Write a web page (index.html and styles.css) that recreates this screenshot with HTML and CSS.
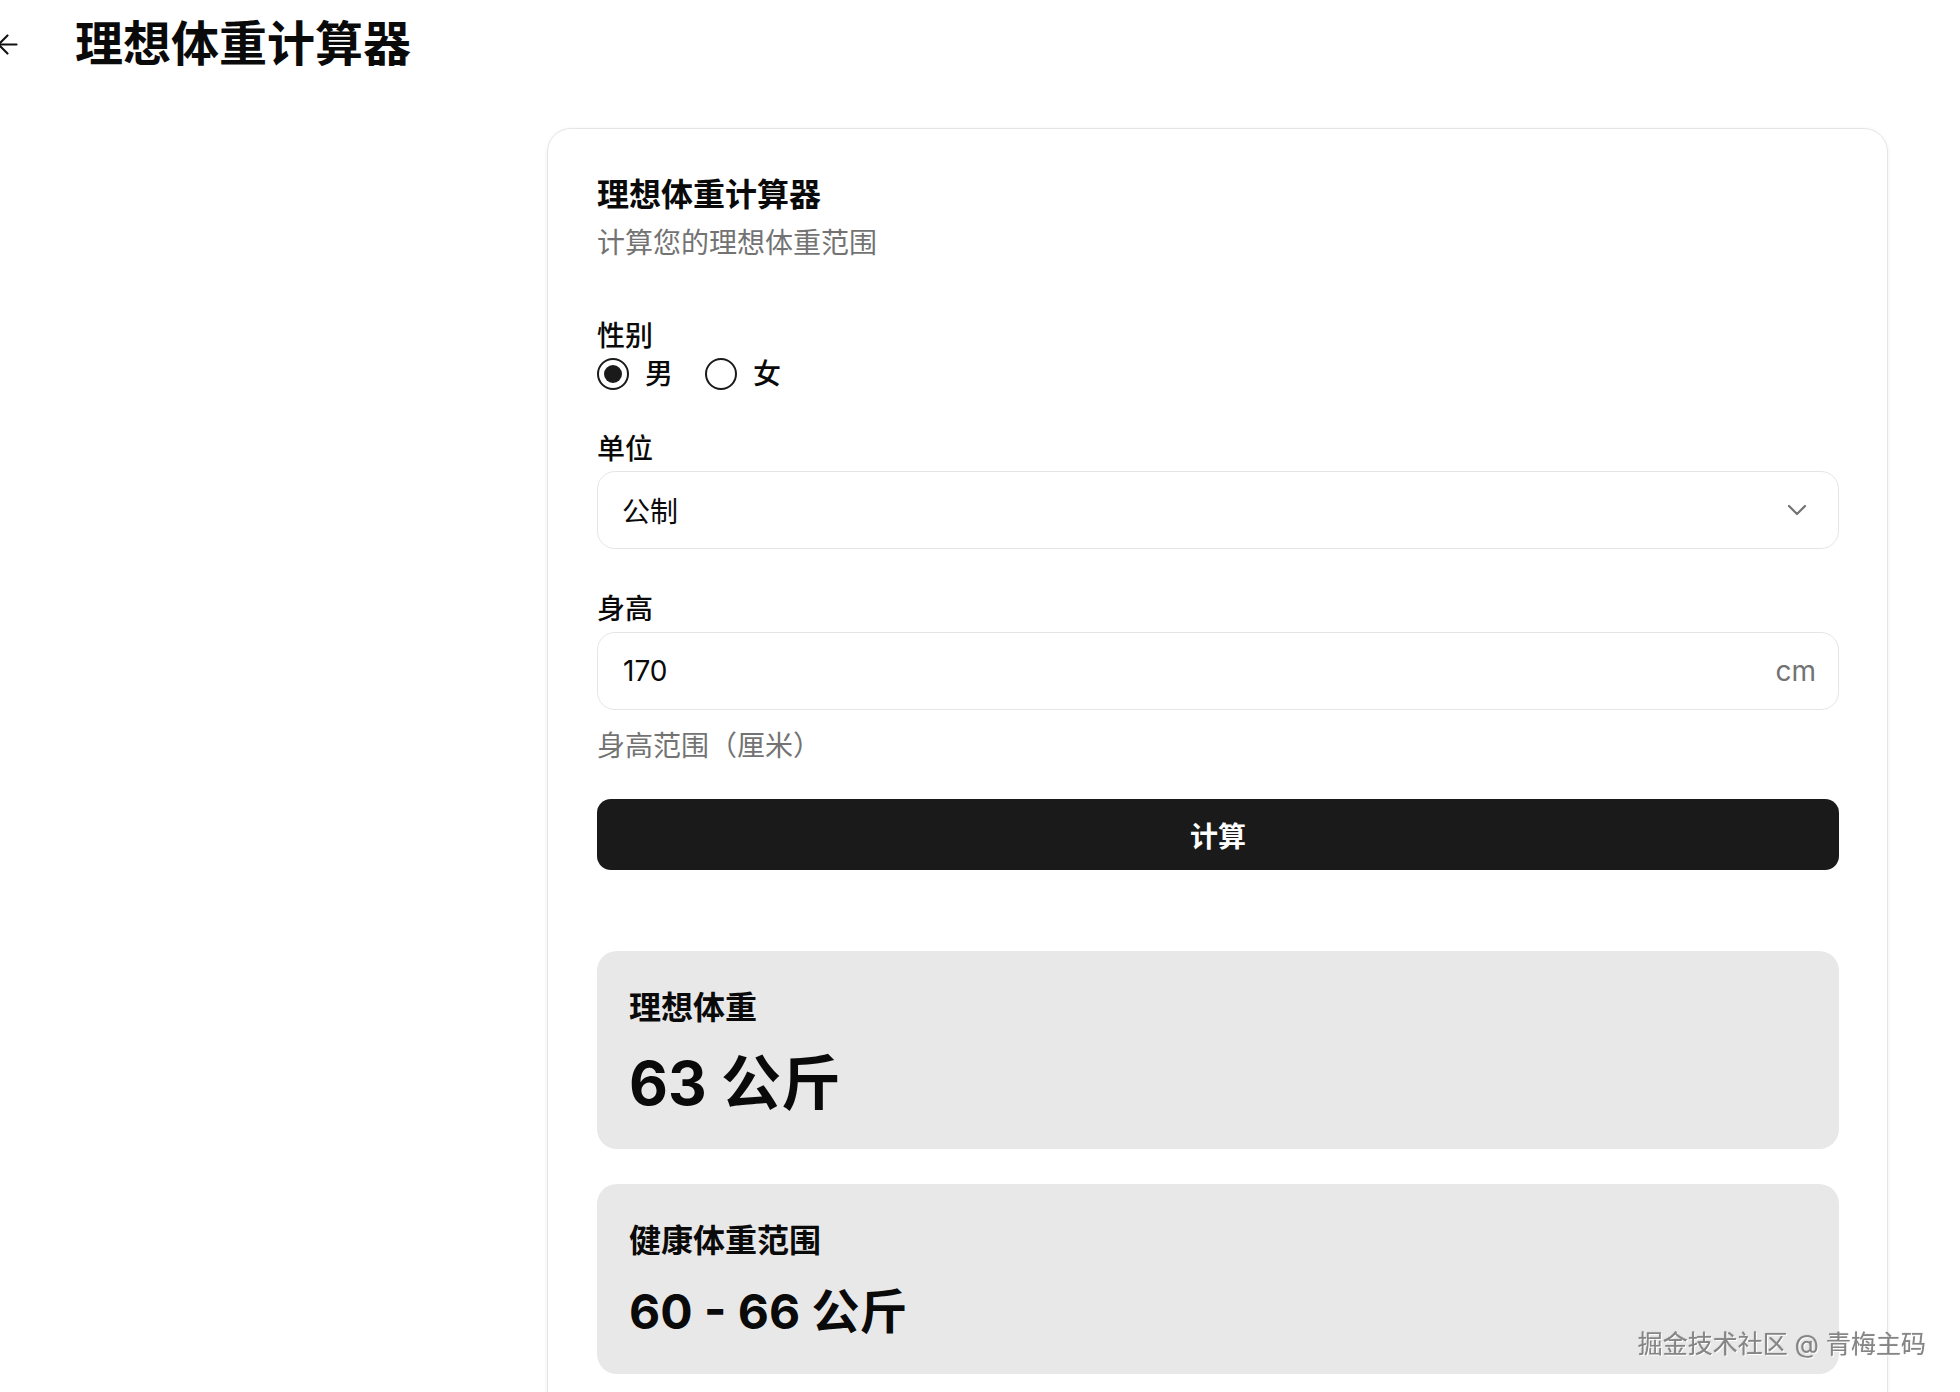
FILE: index.html
```html
<!DOCTYPE html>
<html lang="zh-CN">
<head>
    <meta charset="UTF-8">
    <meta name="viewport" content="width=device-width, initial-scale=1.0">
    <title>理想体重计算器</title>
    <link rel="stylesheet" href="styles.css">
</head>
<body>
    <div class="header">
        <svg class="back" viewBox="0 0 24 24" fill="none" stroke="currentColor" stroke-width="1.6" stroke-linecap="round" stroke-linejoin="round">
            <path d="m12 19-7-7 7-7"/>
            <path d="M19 12H5"/>
        </svg>
        <h1 class="page-title">理想体重计算器</h1>
    </div>

    <div class="main">
        <div class="card">
            <div class="card-title">理想体重计算器</div>
            <div class="card-desc">计算您的理想体重范围</div>

            <div class="form">
                <!--性别-->
                <div class="label">性别</div>
                <div class="radios">
                    <label class="option"><input type="radio" name="sex" checked><span>男</span></label>
                    <label class="option"><input type="radio" name="sex"><span>女</span></label>
                </div>

                <!--单位-->
                <div class="label gap">单位</div>
                <div class="select">
                    <span>公制</span>
                    <svg class="chevron" viewBox="0 0 20 12" fill="none" stroke="currentColor" stroke-width="2.2" stroke-linecap="round" stroke-linejoin="round">
                        <path d="M2 2l8 8 8-8"/>
                    </svg>
                </div>

                <!--身高-->
                <div class="label gap">身高</div>
                <div class="field">
                    <input type="text" value="170">
                    <span class="unit">cm</span>
                </div>
                <div class="hint">身高范围（厘米）</div>

                <button class="btn">计算</button>
            </div>

            <div class="results">
                <div class="result">
                    <div class="result-name">理想体重</div>
                    <div class="result-value big">63 公斤</div>
                </div>
                <div class="result">
                    <div class="result-name">健康体重范围</div>
                    <div class="result-value">60 - 66 公斤</div>
                </div>
            </div>
        </div>
    </div>

    <div class="watermark">掘金技术社区 @ 青梅主码</div>
</body>
</html>
```

FILE: styles.css
```css
* {
  margin: 0;
  padding: 0;
  box-sizing: border-box;
}

body {
  font-family: Inter, "Noto Sans CJK SC", sans-serif;
  color: #0a0a0a;
  background: #fff;
}

.header {
  height: 88px;
  display: flex;
  align-items: center;
  gap: 52px;
}

.back {
  width: 31px;
  height: 31px;
  margin-left: -8px;
  color: #111;
}

.page-title {
  font-size: 48px;
  line-height: 56px;
  font-weight: 700;
}

.main {
  padding: 40px 0 0 547px;
}

.card {
  width: 1341px;
  border: 1px solid #e5e5e5;
  border-radius: 24px;
  padding: 46px 48px 48px 49px;
  box-shadow: 0 1px 4px rgba(0, 0, 0, 0.07);
}

.card-title {
  font-size: 32px;
  line-height: 40px;
  font-weight: 700;
}

.card-desc {
  margin-top: 8px;
  font-size: 28px;
  line-height: 40px;
  color: #737373;
}

.form {
  margin-top: 57px;
}

.label {
  font-size: 28px;
  line-height: 32px;
  font-weight: 500;
}

.label.gap {
  margin-top: 44px;
}

.radios {
  margin-top: 6px;
  height: 32px;
  display: flex;
  gap: 32px;
}

.radios + .label.gap {
  margin-top: 43px;
}

.option {
  display: flex;
  align-items: center;
  gap: 16px;
  font-size: 28px;
  line-height: 32px;
  font-weight: 500;
}

.option input {
  appearance: none;
  width: 32px;
  height: 32px;
  border: 2.5px solid #1a1a1a;
  border-radius: 50%;
  display: flex;
  align-items: center;
  justify-content: center;
}

.option input:checked::after {
  content: "";
  width: 18px;
  height: 18px;
  border-radius: 50%;
  background: #1a1a1a;
}

.select,
.field {
  height: 78px;
  border: 1px solid #e5e5e5;
  border-radius: 18px;
  display: flex;
  align-items: center;
  font-size: 28px;
}

.select {
  margin-top: 6px;
  padding: 0 31px 0 24px;
  justify-content: space-between;
}

.chevron {
  width: 20px;
  height: 12px;
  color: #737373;
}

.field {
  margin-top: 7px;
  padding: 0 22px 0 25px;
}

.field input {
  flex: 1;
  border: 0;
  outline: none;
  font: inherit;
  color: #0a0a0a;
  background: transparent;
}

.unit {
  color: #737373;
}

.hint {
  margin-top: 20px;
  font-size: 28px;
  line-height: 32px;
  color: #737373;
}

.btn {
  display: block;
  width: 100%;
  height: 71px;
  margin-top: 37px;
  border: 0;
  border-radius: 14px;
  background: #1a1a1a;
  color: #fff;
  font-family: inherit;
  font-size: 28px;
  font-weight: 600;
}

.results {
  margin-top: 81px;
  display: flex;
  flex-direction: column;
  gap: 35px;
}

.result {
  background: #e8e8e8;
  border-radius: 20px;
  padding: 36px 32px 30px;
}

.result-name {
  font-size: 32px;
  line-height: 42px;
  font-weight: 600;
}

.result-value {
  margin-top: 18px;
  font-size: 48px;
  line-height: 64px;
  font-weight: 700;
}

.result-value.big {
  font-size: 60px;
  line-height: 72px;
}

.watermark {
  position: fixed;
  right: 34px;
  bottom: 32px;
  font-size: 25px;
  line-height: 32px;
  color: #858585;
  text-shadow: 1px 1px 0 #fff, 0 0 1px rgba(0, 0, 0, 0.45);
}
```
